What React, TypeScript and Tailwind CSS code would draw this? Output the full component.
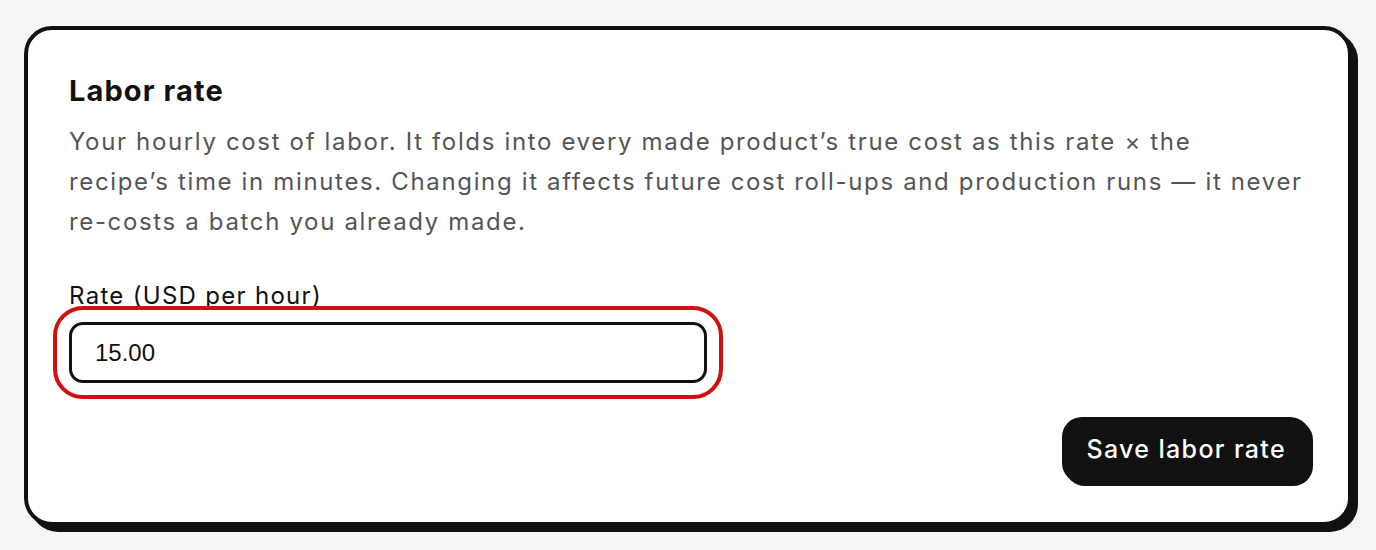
export default function App() {
  return (
    <div className="min-h-[550px] w-full bg-[#f7f6f4] pt-[26px] pl-[24px] pr-[24px] font-['Inter',sans-serif]">
      <div className="w-[1328px] h-[500px] rounded-[28px] border-4 border-[#111111] bg-white shadow-[6px_6px_0_#111111] px-[41px] pt-[43px] flex flex-col">
        <h2 className="text-[29px] font-bold text-[#111111] leading-[36px] tracking-[1.1px]">Labor rate</h2>
        <p className="mt-[13px] text-[24px] leading-[40px] text-[#555555] tracking-[1.65px]">
          Your hourly cost of labor. It folds into every made product’s true cost as this rate × the
          <br />
          recipe’s time in minutes. Changing it affects future cost roll-ups and production runs — it never
          <br />
          re-costs a batch you already made.
        </p>
        <label className="mt-[40px] text-[24px] leading-[28px] text-[#111111] tracking-[1.3px]">Rate (USD per hour)</label>
        <input
          defaultValue="15.00"
          className="mt-[12px] w-[638px] h-[61px] rounded-[14px] border-[3px] border-[#111111] px-[23px] text-[24px] text-[#111111] font-['Liberation_Sans',sans-serif] outline-4 outline-[#d01010] outline-offset-[12px]"
        />
        <div className="flex justify-end mt-[34px] mr-[-3px]">
          <button className="h-[66px] rounded-[20px] bg-[#111111] px-[24px] text-[25px] font-medium text-white shadow-[3px_3px_0_#111111] tracking-[1.35px]">
            Save labor rate
          </button>
        </div>
      </div>
    </div>
  );
}
